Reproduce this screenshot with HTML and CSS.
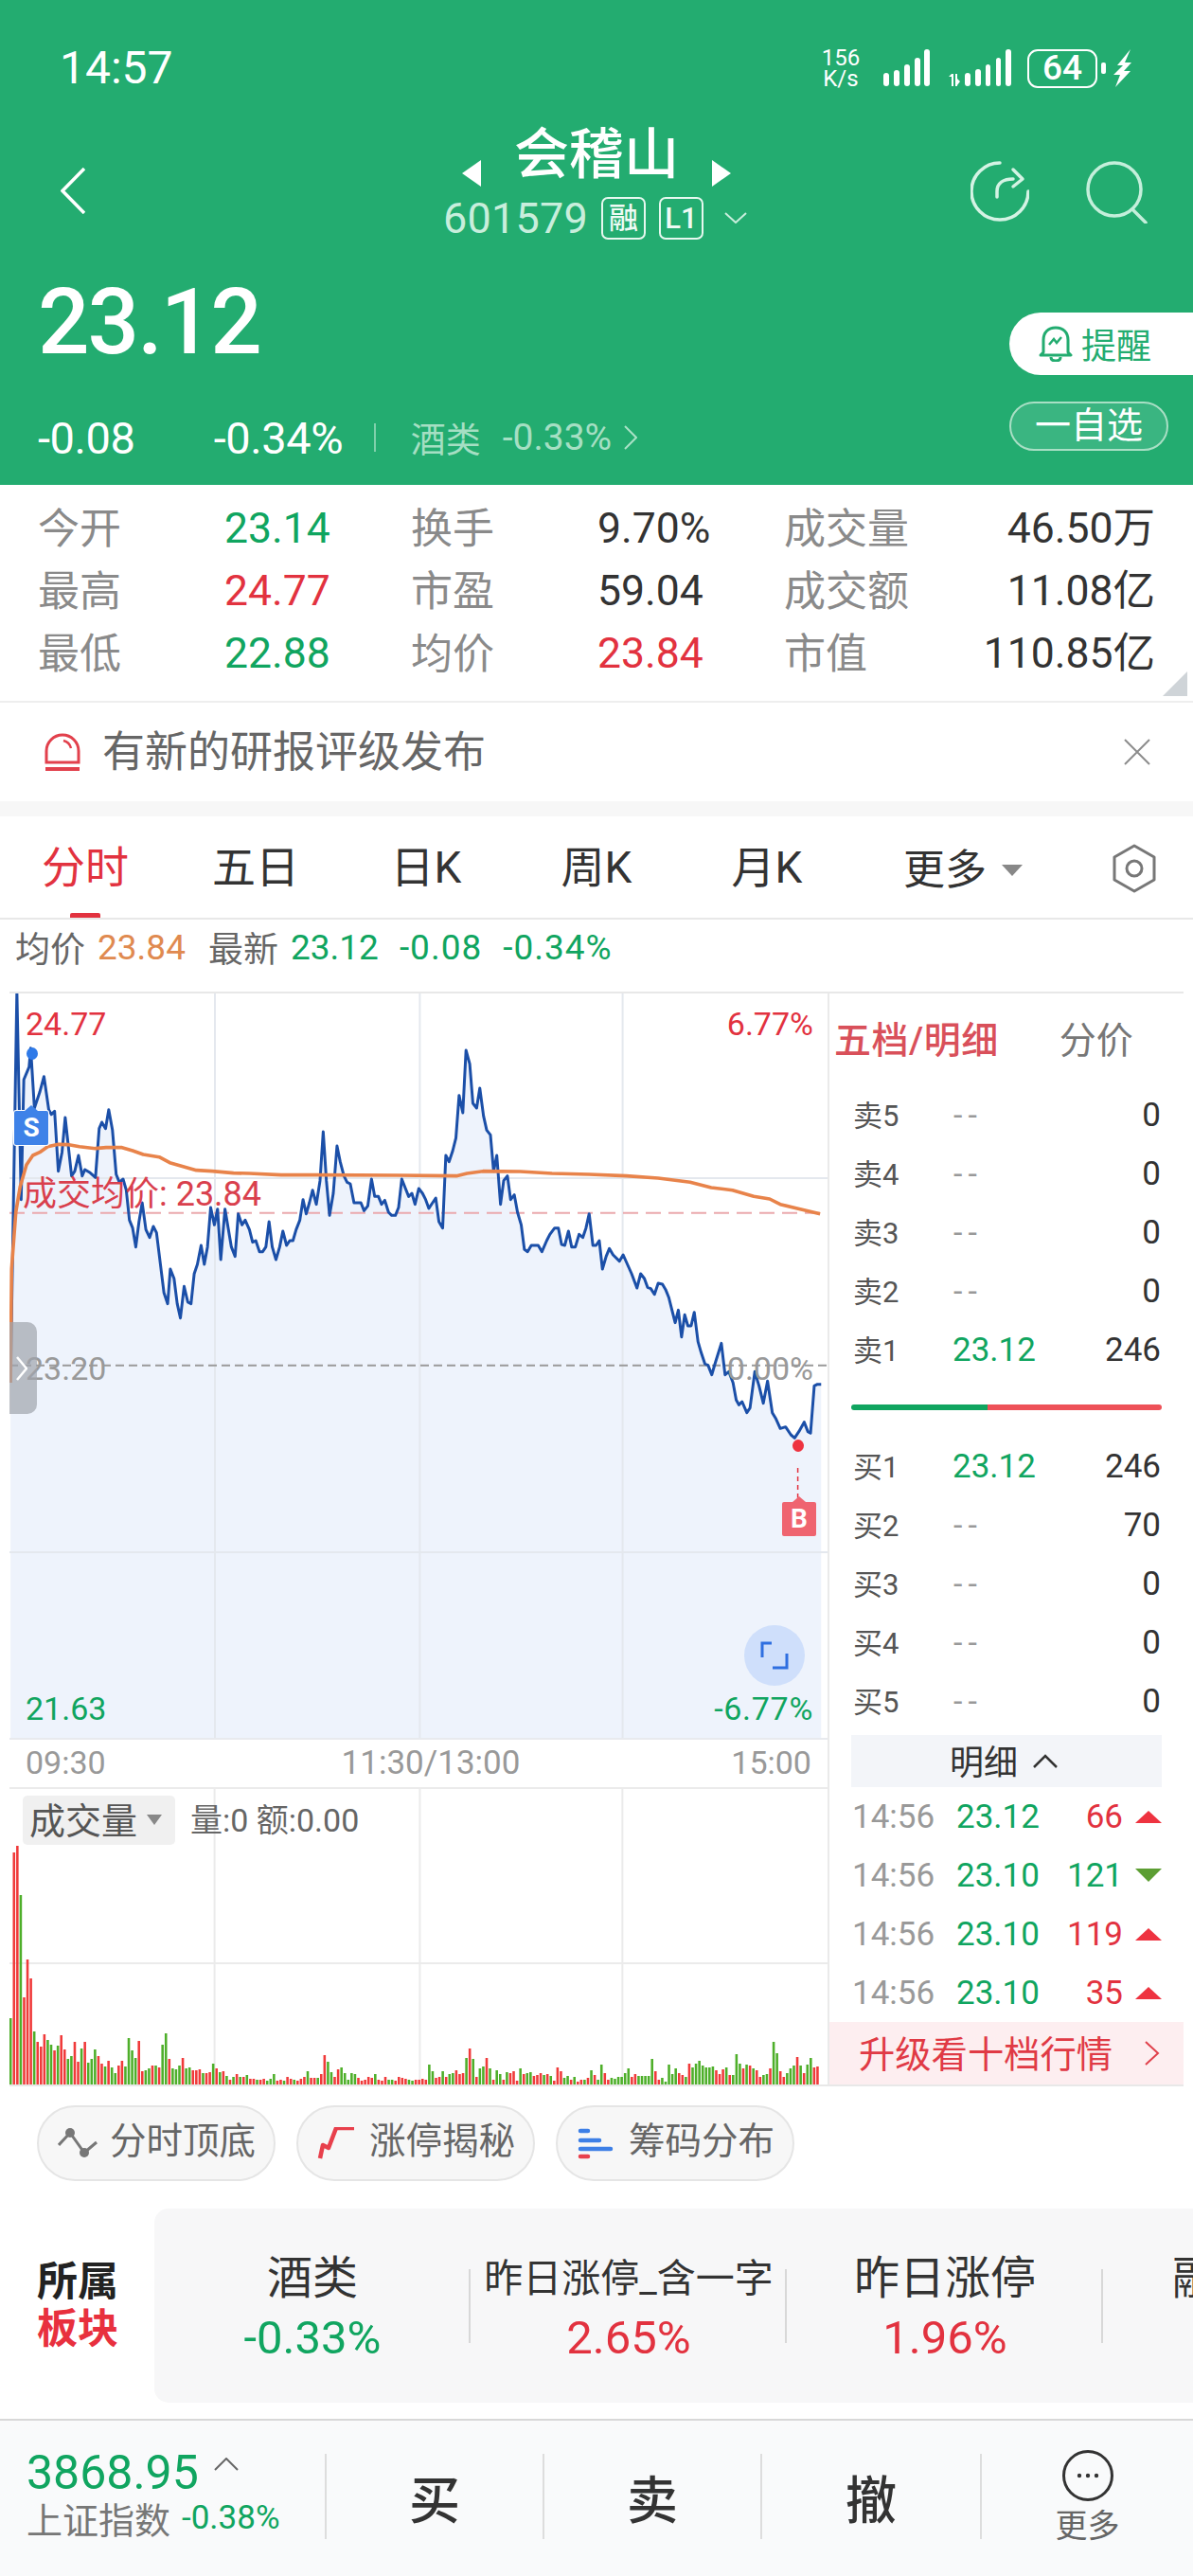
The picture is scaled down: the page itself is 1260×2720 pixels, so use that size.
FILE: index.html
```html
<!DOCTYPE html>
<html lang="zh-CN">
<head>
<meta charset="utf-8">
<title>会稽山</title>
<link rel="stylesheet" href="styles.css">
</head>
<body>
<div class="page">
  <header class="hero">
    <div class="status">
      <span class="clock">14:57</span>
      <div class="status-right">
        <div class="speed"><span>156</span><span>K/s</span></div>
        <svg class="sig1" width="50" height="40" viewBox="0 0 50 40"><g fill="#fff"><rect x="0" y="25" width="6" height="14" rx="3"/><rect x="11" y="22" width="6" height="17" rx="3"/><rect x="22" y="16" width="6" height="23" rx="3"/><rect x="33" y="9" width="6" height="30" rx="3"/><rect x="43" y="0" width="6" height="39" rx="3"/></g></svg>
        <svg class="sig2" width="70" height="40" viewBox="0 0 70 40"><g fill="#fff"><path d="M4 29l3-3h2v13H7V29zM11 26h2v13h-2zM13 31l3 3-3 4z"/><rect x="21" y="25" width="6" height="14" rx="3"/><rect x="32" y="21" width="6" height="18" rx="3"/><rect x="43" y="16" width="5" height="23" rx="2.5"/><rect x="54" y="9" width="5" height="30" rx="2.5"/><rect x="64" y="0" width="6" height="39" rx="3"/></g></svg>
        <div class="battery">64</div>
        <span class="battery-tip"></span>
        <svg class="bolt" width="20" height="40" viewBox="0 0 20 40"><path fill="#fff" d="M18 0L4 17h6L0 27h7L2 40l16-17h-7l8-9h-7z"/></svg>
      </div>
    </div>
    <div class="nav">
      <svg class="back" width="26" height="49" viewBox="0 0 26 49"><path d="M25 1L2 24.5 25 48" fill="none" stroke="#fff" stroke-width="3.5"/></svg>
      <div class="nav-center">
        <div class="title-row">
          <span class="tri-left"></span>
          <h1 class="title">会稽山</h1>
          <span class="tri-right"></span>
        </div>
        <div class="code-row">
          <span class="code">601579</span>
          <span class="badge badge-first">融</span>
          <span class="badge">L1</span>
          <svg class="code-caret" width="24" height="12" viewBox="0 0 24 12"><path d="M1 1l11 10L23 1" fill="none" stroke="#c8eedc" stroke-width="2"/></svg>
        </div>
      </div>
      <div class="nav-tools">
        <svg width="62" height="64" viewBox="0 0 62 64"><g fill="none" stroke="#d4f3e4" stroke-width="3.5" stroke-linecap="round" stroke-linejoin="round"><path d="M31 2A30 30 0 1 0 61 32"/><path d="M28 38v-6c0-9 7-13 17-13"/><path d="M45 9l10 10-10 8"/></g></svg>
        <svg width="66" height="66" viewBox="0 0 66 66"><g fill="none" stroke="#c4efdb" stroke-width="3.5" stroke-linecap="round"><circle cx="30" cy="30" r="28"/><path d="M50 52l13 13"/></g></svg>
      </div>
    </div>
    <div class="quote">
      <div class="quote-left">
        <div class="price">23.12</div>
        <div class="change-row">
          <span class="chg">-0.08</span>
          <span class="chg chg-pct">-0.34%</span>
          <span class="sep"></span>
          <span class="industry">酒类</span>
          <span class="industry-pct">-0.33%</span>
          <svg class="industry-arrow" width="14" height="26" viewBox="0 0 14 26"><path d="M1 1l12 12L1 25" fill="none" stroke="#a9e2c6" stroke-width="2"/></svg>
        </div>
      </div>
      <div class="quote-right">
        <div class="remind">
          <svg width="36" height="38" viewBox="0 0 36 38"><g fill="none" stroke="#23ac70" stroke-width="3"><path d="M5 28V15C5 7 10 2 18 2s13 5 13 13v13l3 3H2z" stroke-linejoin="round"/><path d="M13 33c0 3 2 4 5 4s5-1 5-4"/><path d="M11 20l5-6 3 4 5-6" stroke-width="2.5"/></g></svg>
          <span>提醒</span>
        </div>
        <div class="watch">一自选</div>
      </div>
    </div>
  </header>

  <section class="stats">
    <span class="s-label">今开</span><span class="s-val green">23.14</span>
    <span class="s-label">换手</span><span class="s-val">9.70%</span>
    <span class="s-label">成交量</span><span class="s-val right">46.50万</span>
    <span class="s-label">最高</span><span class="s-val red">24.77</span>
    <span class="s-label">市盈</span><span class="s-val">59.04</span>
    <span class="s-label">成交额</span><span class="s-val right">11.08亿</span>
    <span class="s-label">最低</span><span class="s-val green">22.88</span>
    <span class="s-label">均价</span><span class="s-val red">23.84</span>
    <span class="s-label">市值</span><span class="s-val right">110.85亿</span>
    <span class="corner"></span>
  </section>

  <section class="notice">
    <svg class="notice-icon" width="38" height="40" viewBox="0 0 38 40"><g fill="none" stroke="#e2404c" stroke-width="3"><path d="M2 31V19a17 17 0 0 1 34 0v12z"/><path d="M20 8c4 1 7 4 8 8" stroke-width="2.5"/><path d="M1 38h36" stroke-width="4"/></g></svg>
    <span class="notice-text">有新的研报评级发布</span>
    <svg class="notice-x" width="28" height="28" viewBox="0 0 28 28"><path d="M1 1l26 26M27 1L1 27" stroke="#8c8c8c" stroke-width="2"/></svg>
  </section>
  <div class="band"></div>

  <nav class="tabs">
    <span class="tab active">分时</span>
    <span class="tab">五日</span>
    <span class="tab">日K</span>
    <span class="tab">周K</span>
    <span class="tab">月K</span>
    <span class="tab-more">更多<i class="caret"></i></span>
    <svg class="gear" width="48" height="52" viewBox="0 0 48 52"><g fill="none" stroke="#777" stroke-width="3"><path d="M24 2l21 12v24L24 50 3 38V14z" stroke-linejoin="round"/><circle cx="24" cy="26" r="8"/></g></svg>
  </nav>

  <div class="info">
    <span class="i-label">均价</span><span class="i-val orange">23.84</span>
    <span class="i-label i-gap">最新</span><span class="i-val green">23.12</span>
    <span class="i-pair green">-0.08</span><span class="i-pair green">-0.34%</span>
  </div>

  <section class="market">
    <div class="charts">
      <div class="main-chart">
        <svg class="fill-svg" viewBox="18 27 1541 2358" preserveAspectRatio="none">
          <path class="area" d="M20 1260L32 20L40 680L45 300L55 260L58 200L65 390L75 340L83 290L92 395L97 410L103 400L110 590L117 530L123 420L135 605L141 590L148 540L155 605L160 585L170 595L180 610L187 455L192 435L199 455L205 395L212 460L219 600L225 625L232 615L238 650L244 745L250 770L256 830L262 750L268 690L275 775L282 800L289 765L295 785L302 880L309 975L316 1010L321 900L328 930L334 1010L340 1055L347 955L354 1005L360 1010L366 915L372 885L379 825L385 885L391 830L397 705L404 760L410 710L416 870L424 710L430 770L436 830L443 860L449 725L456 760L462 745L470 775L476 815L482 810L489 845L495 845L501 830L507 750L513 830L520 870L527 830L533 780L540 825L546 810L552 810L558 775L565 745L571 680L577 725L583 690L589 650L596 695L603 620L609 465L615 620L621 730L628 660L635 510L641 560L648 605L654 625L660 630L667 690L674 690L680 690L686 715L693 700L700 615L706 670L713 670L719 695L725 682L732 720L738 730L745 730L751 705L757 615L764 645L770 670L776 660L782 695L789 645L796 660L802 680L808 708L815 690L821 675L827 750L834 770L840 540L846 560L853 525L859 485L865 350L872 405L878 207L885 250L891 375L898 390L904 327L911 415L917 460L924 475L930 590L936 540L943 695L949 620L956 605L962 680L969 665L975 720L982 760L988 838L994 845L1001 825L1014 825L1021 845L1030 810L1036 790L1045 770L1052 770L1058 822L1064 825L1071 780L1077 830L1084 830L1091 790L1098 800L1104 770L1110 725L1117 825L1123 825L1129 810L1135 900L1142 860L1148 835L1155 855L1167 875L1174 855L1182 885L1190 915L1200 960L1207 915L1214 930L1220 958L1226 962L1233 980L1240 945L1248 948L1254 965L1260 990L1266 1030L1272 1070L1278 1030L1284 1115L1290 1045L1296 1080L1302 1080L1308 1037L1315 1130L1321 1165L1328 1200L1334 1205L1341 1235L1347 1200L1359 1135L1366 1235L1373 1225L1381 1260L1387 1315L1392 1330L1398 1320L1407 1355L1413 1340L1422 1225L1430 1270L1438 1325L1446 1255L1455 1355L1462 1375L1470 1405L1480 1400L1490 1425L1497 1435L1505 1415L1515 1385L1522 1415L1527 1420L1534 1270L1540 1265L1547 1265V2385H20Z"/>
          <g class="grid"><path d="M405 27V2385M791 27V2385M1173 27V2385M18 612H1559M18 1797H1559"/></g>
          <path class="dash-red" d="M18 722H1559"/>
          <path class="dash-grey" d="M18 1205H1559"/>
          <path class="price-line" d="M20 1260L32 20L40 680L45 300L55 260L58 200L65 390L75 340L83 290L92 395L97 410L103 400L110 590L117 530L123 420L135 605L141 590L148 540L155 605L160 585L170 595L180 610L187 455L192 435L199 455L205 395L212 460L219 600L225 625L232 615L238 650L244 745L250 770L256 830L262 750L268 690L275 775L282 800L289 765L295 785L302 880L309 975L316 1010L321 900L328 930L334 1010L340 1055L347 955L354 1005L360 1010L366 915L372 885L379 825L385 885L391 830L397 705L404 760L410 710L416 870L424 710L430 770L436 830L443 860L449 725L456 760L462 745L470 775L476 815L482 810L489 845L495 845L501 830L507 750L513 830L520 870L527 830L533 780L540 825L546 810L552 810L558 775L565 745L571 680L577 725L583 690L589 650L596 695L603 620L609 465L615 620L621 730L628 660L635 510L641 560L648 605L654 625L660 630L667 690L674 690L680 690L686 715L693 700L700 615L706 670L713 670L719 695L725 682L732 720L738 730L745 730L751 705L757 615L764 645L770 670L776 660L782 695L789 645L796 660L802 680L808 708L815 690L821 675L827 750L834 770L840 540L846 560L853 525L859 485L865 350L872 405L878 207L885 250L891 375L898 390L904 327L911 415L917 460L924 475L930 590L936 540L943 695L949 620L956 605L962 680L969 665L975 720L982 760L988 838L994 845L1001 825L1014 825L1021 845L1030 810L1036 790L1045 770L1052 770L1058 822L1064 825L1071 780L1077 830L1084 830L1091 790L1098 800L1104 770L1110 725L1117 825L1123 825L1129 810L1135 900L1142 860L1148 835L1155 855L1167 875L1174 855L1182 885L1190 915L1200 960L1207 915L1214 930L1220 958L1226 962L1233 980L1240 945L1248 948L1254 965L1260 990L1266 1030L1272 1070L1278 1030L1284 1115L1290 1045L1296 1080L1302 1080L1308 1037L1315 1130L1321 1165L1328 1200L1334 1205L1341 1235L1347 1200L1359 1135L1366 1235L1373 1225L1381 1260L1387 1315L1392 1330L1398 1320L1407 1355L1413 1340L1422 1225L1430 1270L1438 1325L1446 1255L1455 1355L1462 1375L1470 1405L1480 1400L1490 1425L1497 1435L1505 1415L1515 1385L1522 1415L1527 1420L1534 1270L1540 1265L1547 1265"/>
          <path class="avg-line" d="M20 1260L22 900L30 720L38 640L50 570L62 540L75 530L90 512L110 505L130 506L150 512L180 518L200 515L230 515L250 525L270 537L300 545L320 563L345 575L370 587L400 590L440 596L470 597L530 602L600 602L750 603L860 605L880 597L910 590L980 591L1040 597L1110 600L1180 605L1240 612L1300 625L1340 642L1380 650L1420 670L1450 678L1470 695L1500 707L1545 725"/>
          <path class="b-link" d="M1503 1530V1625"/>
        </svg>
        <span class="lbl lbl-tl red">24.77</span>
        <span class="lbl lbl-tr red">6.77%</span>
        <span class="lbl lbl-avg">成交均价: 23.84</span>
        <span class="lbl lbl-ml grey">23.20</span>
        <span class="lbl lbl-mr grey">0.00%</span>
        <span class="lbl lbl-bl green">21.63</span>
        <span class="lbl lbl-br green">-6.77%</span>
        <span class="dot-s"></span>
        <span class="tag tag-s">S</span>
        <span class="dot-b"></span>
        <span class="tag tag-b">B</span>
        <span class="handle"><svg width="12" height="26" viewBox="0 0 12 26"><path d="M1 1l10 12L1 25" fill="none" stroke="#fff" stroke-width="2.5"/></svg></span>
        <span class="expand"><svg width="30" height="30" viewBox="0 0 30 30"><path d="M12 2H2v15M28 13v15H13" fill="none" stroke="#2f6fe0" stroke-width="3"/></svg></span>
      </div>
      <div class="axis"><span>09:30</span><span>11:30/13:00</span><span>15:00</span></div>
      <div class="vol-chart">
        <svg class="fill-svg" viewBox="-0.34 -312 242.3 312" preserveAspectRatio="none">
          <g class="grid vol-grid"><path d="M60.4 -312V0M121.2 -312V0M181.2 -312V0M-1 -128H243"/></g>
          <path class="bars bars-red" d="M1 0v-245M2 0v-252M4 0v-92M5 0v-132M6 0v-112M8 0v-45M9 0v-40M10 0v-53M13 0v-36M15 0v-52M16 0v-37M19 0v-45M20 0v-24M22 0v-45M26 0v-30M27 0v-22M29 0v-25M32 0v-20M33 0v-25M38 0v-46M39 0v-14M42 0v-20M44 0v-18M47 0v-27M51 0v-28M54 0v-15M55 0v-15M56 0v-16M58 0v-12M59 0v-13M61 0v-17M63 0v-14M65 0v-5M67 0v-11M69 0v-8M71 0v-6M72 0v-6M74 0v-5M75 0v-6M79 0v-4M80 0v-5M82 0v-8M83 0v-6M85 0v-4M86 0v-6M87 0v-8M89 0v-7M90 0v-7M92 0v-11M93 0v-31M96 0v-8M97 0v-16M103 0v-7M104 0v-4M105 0v-5M106 0v-8M107 0v-7M109 0v-5M110 0v-4M111 0v-8M114 0v-4M115 0v-8M116 0v-7M117 0v-6M120 0v-5M121 0v-5M122 0v-6M123 0v-5M126 0v-7M127 0v-8M129 0v-8M132 0v-15M133 0v-11M134 0v-12M136 0v-38M138 0v-8M141 0v-28M143 0v-5M146 0v-5M148 0v-12M149 0v-14M150 0v-4M152 0v-11M155 0v-9M156 0v-10M157 0v-12M159 0v-11M161 0v-4M162 0v-18M163 0v-14M166 0v-5M168 0v-3M169 0v-5M171 0v-7M173 0v-10M176 0v-12M177 0v-5M184 0v-8M185 0v-11M191 0v-14M192 0v-5M198 0v-12M199 0v-10M201 0v-22M209 0v-15M210 0v-11M211 0v-16M213 0v-10M217 0v-17M219 0v-20M221 0v-15M222 0v-8M225 0v-17M228 0v-14M229 0v-8M233 0v-29M235 0v-12M238 0v-18M239 0v-19"/>
          <path class="bars bars-green" d="M0 0v-70M3 0v-200M7 0v-56M11 0v-47M12 0v-42M14 0v-41M17 0v-27M18 0v-30M21 0v-38M23 0v-23M24 0v-27M25 0v-37M28 0v-19M30 0v-18M31 0v-12M34 0v-19M35 0v-49M36 0v-36M37 0v-28M40 0v-15M41 0v-17M43 0v-20M45 0v-42M46 0v-54M48 0v-17M49 0v-16M50 0v-20M52 0v-17M53 0v-18M57 0v-12M60 0v-22M62 0v-13M64 0v-9M66 0v-8M68 0v-8M70 0v-10M73 0v-5M76 0v-4M77 0v-6M78 0v-11M81 0v-4M84 0v-5M88 0v-14M91 0v-7M94 0v-24M95 0v-13M98 0v-18M99 0v-12M100 0v-5M101 0v-12M102 0v-11M108 0v-11M112 0v-5M113 0v-5M118 0v-5M119 0v-4M124 0v-21M125 0v-14M128 0v-14M130 0v-11M131 0v-12M135 0v-28M137 0v-27M139 0v-17M140 0v-19M142 0v-17M144 0v-15M145 0v-11M147 0v-13M151 0v-17M153 0v-12M154 0v-13M158 0v-10M160 0v-9M164 0v-7M165 0v-9M167 0v-8M170 0v-5M172 0v-15M174 0v-5M175 0v-21M178 0v-7M179 0v-6M180 0v-8M181 0v-8M182 0v-12M183 0v-17M186 0v-9M187 0v-9M188 0v-9M189 0v-9M190 0v-27M193 0v-7M194 0v-3M195 0v-21M196 0v-11M197 0v-17M200 0v-8M202 0v-18M203 0v-22M204 0v-25M205 0v-20M206 0v-18M207 0v-18M208 0v-19M212 0v-18M214 0v-10M215 0v-32M216 0v-22M218 0v-21M220 0v-17M223 0v-10M224 0v-11M226 0v-45M227 0v-33M230 0v-12M231 0v-17M232 0v-20M234 0v-20M236 0v-21M237 0v-28"/>
        </svg>
        <div class="vol-head">
          <span class="vol-tag"><span class="vol-tag-text">成交量</span><i class="caret small"></i></span>
          <span class="vol-text">量:0 额:0.00</span>
        </div>
      </div>
    </div>
    <aside class="book">
      <div class="book-tabs"><span class="book-tab-on">五档/明细</span><span class="book-tab-off">分价</span></div>
      <div class="book-rows">
        <div class="row"><span class="r-name">卖5</span><span class="r-none">--</span><span class="r-vol">0</span></div>
        <div class="row"><span class="r-name">卖4</span><span class="r-none">--</span><span class="r-vol">0</span></div>
        <div class="row"><span class="r-name">卖3</span><span class="r-none">--</span><span class="r-vol">0</span></div>
        <div class="row"><span class="r-name">卖2</span><span class="r-none">--</span><span class="r-vol">0</span></div>
        <div class="row"><span class="r-name">卖1</span><span class="r-price green">23.12</span><span class="r-vol">246</span></div>
      </div>
      <div class="ratio"><span class="ratio-g"></span><span class="ratio-r"></span></div>
      <div class="book-rows">
        <div class="row"><span class="r-name">买1</span><span class="r-price green">23.12</span><span class="r-vol">246</span></div>
        <div class="row"><span class="r-name">买2</span><span class="r-none">--</span><span class="r-vol">70</span></div>
        <div class="row"><span class="r-name">买3</span><span class="r-none">--</span><span class="r-vol">0</span></div>
        <div class="row"><span class="r-name">买4</span><span class="r-none">--</span><span class="r-vol">0</span></div>
        <div class="row"><span class="r-name">买5</span><span class="r-none">--</span><span class="r-vol">0</span></div>
      </div>
      <div class="detail-head"><span>明细</span><svg width="26" height="15" viewBox="0 0 26 15"><path d="M1 14L13 2l12 12" fill="none" stroke="#333" stroke-width="2.5"/></svg></div>
      <div class="tick"><span class="t-time">14:56</span><span class="t-price green">23.12</span><span class="t-vol red">66</span><i class="up"></i></div>
      <div class="tick"><span class="t-time">14:56</span><span class="t-price green">23.10</span><span class="t-vol green">121</span><i class="down"></i></div>
      <div class="tick"><span class="t-time">14:56</span><span class="t-price green">23.10</span><span class="t-vol red">119</span><i class="up"></i></div>
      <div class="tick"><span class="t-time">14:56</span><span class="t-price green">23.10</span><span class="t-vol red">35</span><i class="up"></i></div>
      <div class="upgrade"><span>升级看十档行情</span><svg width="16" height="26" viewBox="0 0 16 26"><path d="M1 1l13 12L1 25" fill="none" stroke="#e0404b" stroke-width="2"/></svg></div>
    </aside>
  </section>

  <div class="chips">
    <div class="chip">
      <span class="chip-icon"><svg width="42" height="32" viewBox="0 0 42 32"><g fill="none" stroke="#777" stroke-width="3"><path d="M1 18L13 5l15 21 13-11"/></g><circle cx="13" cy="5" r="5" fill="#777"/><circle cx="28" cy="26" r="5" fill="#777"/></svg></span>
      <span class="chip-text">分时顶底</span>
    </div>
    <div class="chip">
      <span class="chip-icon"><svg width="40" height="34" viewBox="0 0 40 34"><path d="M3 33l3-14 6 3 8-21h19" fill="none" stroke="#e8404c" stroke-width="4.5" stroke-linejoin="round"/></svg></span>
      <span class="chip-text">涨停揭秘</span>
    </div>
    <div class="chip">
      <span class="chip-icon"><svg width="40" height="34" viewBox="0 0 40 34"><g fill="none" stroke-width="4.5" stroke-linecap="round"><path d="M4 4h8M4 14h20M4 23h32" stroke="#3d7fe6"/><path d="M4 31h8" stroke="#e8404c"/></g></svg></span>
      <span class="chip-text">筹码分布</span>
    </div>
  </div>

  <section class="sectors">
    <div class="sec-title"><span>所属</span><span class="red-strong">板块</span></div>
    <div class="sec-card">
      <div class="sec-item"><span class="sec-name">酒类</span><span class="sec-val green">-0.33%</span></div>
      <div class="sec-item"><span class="sec-name narrow">昨日涨停_含一字</span><span class="sec-val red">2.65%</span></div>
      <div class="sec-item"><span class="sec-name">昨日涨停</span><span class="sec-val red">1.96%</span></div>
      <div class="sec-item sec-last"><span class="sec-name">融</span></div>
    </div>
  </section>

  <footer class="footer">
    <div class="f-index">
      <div class="f-top"><span class="f-num">3868.95</span><svg width="26" height="14" viewBox="0 0 26 14"><path d="M1 13L13 1l12 12" fill="none" stroke="#666" stroke-width="2"/></svg></div>
      <div class="f-bottom"><span class="f-name">上证指数</span><span class="f-pct">-0.38%</span></div>
    </div>
    <div class="f-btn">买</div>
    <div class="f-btn">卖</div>
    <div class="f-btn f-wide">撤</div>
    <div class="f-more">
      <svg width="54" height="54" viewBox="0 0 54 54"><circle cx="27" cy="27" r="25.5" fill="none" stroke="#333" stroke-width="3"/><g fill="#333"><circle cx="18" cy="27" r="2.2"/><circle cx="27" cy="27" r="2.2"/><circle cx="36" cy="27" r="2.2"/></g></svg>
      <span>更多</span>
    </div>
  </footer>
</div>
</body>
</html>
```
FILE: styles.css
```css
* { box-sizing: border-box; margin: 0; padding: 0; }
html, body { background: #fff; }
body { font-family: Roboto, "Noto Sans CJK SC", sans-serif; color: #333; }
i { font-style: normal; }
svg { display: block; flex: none; }
.page { width: 1260px; height: 2720px; overflow: hidden; display: flex; flex-direction: column; }

.green { color: #10a560; }
.red { color: #e2323f; }
.grey { color: #999; }
.orange { color: #e08a50; }

/* header */
.hero { background: #23ac70; height: 512px; color: #fff; flex: none; }
.status { height: 126px; padding: 18px 64px 0 64px; display: flex; justify-content: space-between; align-items: center; }
.clock { font-size: 48px; line-height: 1; margin-left: -1px; }
.status-right { display: flex; align-items: center; }
.speed { display: flex; flex-direction: column; align-items: center; width: 44px; font-size: 24px; line-height: 22px; margin-left: -30px; }
.sig1 { margin-left: 23px; }
.sig2 { margin-left: 15px; }
.battery { margin-left: 17px; width: 74px; height: 41px; border: 2.5px solid #fff; border-radius: 11px; font-size: 37px; font-weight: 500; line-height: 36px; text-align: center; }
.battery-tip { width: 5px; height: 12px; margin-left: 4px; background: #fff; border-radius: 2px; }
.bolt { margin-left: 8px; }

.nav { height: 134px; display: flex; position: relative; padding-left: 64px; }
.back { margin-top: 51px; }
.nav-center { position: absolute; left: 0; right: 0; top: 0; display: flex; flex-direction: column; align-items: center; }
.title-row { display: flex; align-items: center; height: 74px; gap: 35px; }
.title { font-size: 58px; font-weight: 500; line-height: 74px; }
.tri-left, .tri-right { width: 0; height: 0; margin-top: 40px; border-top: 14px solid transparent; border-bottom: 14px solid transparent; }
.tri-left { border-right: 20px solid #fff; }
.tri-right { border-left: 20px solid #fff; }
.code-row { display: flex; align-items: center; height: 60px; margin-left: -3px; }
.code { font-size: 45px; color: #c8eedc; letter-spacing: 0.2px; }
.badge { width: 47px; height: 45px; margin-left: 14px; border: 2px solid #e6f8ef; border-radius: 7px; font-size: 31px; font-weight: 500; line-height: 41px; text-align: center; color: #eefaf4; }
.code-caret { margin-left: 22px; }
.nav-tools { margin-left: auto; margin-right: 47px; margin-top: 44px; display: flex; gap: 60px; position: relative; align-self: flex-start; }

.quote { display: flex; justify-content: space-between; }
.quote-left { padding-left: 40px; }
.price { font-size: 96px; font-weight: 500; line-height: 160px; letter-spacing: -2px; height: 156px; }
.change-row { height: 92px; display: flex; align-items: center; }
.chg { font-size: 47px; letter-spacing: -0.4px; }
.chg-pct { margin-left: 83px; }
.sep { width: 1.5px; height: 30px; margin-left: 33px; background: #7fd0ab; }
.industry { margin-left: 37px; font-size: 37px; color: #a5dfc3; }
.industry-pct { margin-left: 23px; font-size: 39px; color: #a5dfc3; }
.industry-arrow { margin-left: 13px; }
.quote-right { display: flex; flex-direction: column; align-items: flex-end; padding-top: 70px; }
.remind { width: 194px; height: 66px; background: #fff; border-radius: 33px 0 0 33px; display: flex; align-items: center; padding-left: 31px; gap: 9px; color: #23ac70; font-size: 37px; }
.watch { width: 168px; height: 52px; margin: 28px 26px 0 0; border: 2px solid #a9dfc5; border-radius: 26px; background: #3ab581; font-size: 38px; line-height: 46px; text-align: center; color: #fff; }

/* stats */
.stats { height: 230px; padding-top: 14px; padding-left: 40px; border-bottom: 2px solid #eee; flex: none; display: grid; grid-template-columns: 197px 197px 197px 197px 196px 196px; grid-auto-rows: 66px; position: relative; font-size: 44.5px; }
.s-label { color: #8a8a8a; font-size: 44px; line-height: 66px; }
.s-val { color: #333; line-height: 64px; white-space: nowrap; }
.s-val.green { color: #10a560; }
.s-val.red { color: #e2323f; }
.s-val.right { text-align: right; }
.corner { position: absolute; right: 6px; top: 197px; width: 0; height: 0; border-left: 26px solid transparent; border-bottom: 26px solid #cfd4d8; }

/* notice */
.notice { height: 104px; display: flex; align-items: center; padding: 0 45px 0 47px; flex: none; }
.notice-text { margin-left: 23px; margin-bottom: 7px; font-size: 45px; color: #666; }
.notice-x { margin-left: auto; }
.band { height: 16px; background: #f7f7f7; flex: none; }

/* tabs */
.tabs { height: 109px; border-bottom: 2px solid #e8e8e8; padding: 0 38px 0 0; display: flex; align-items: center; flex: none; }
.tab { width: 180px; height: 100%; text-align: center; font-size: 46px; line-height: 108px; color: #333; position: relative; }
.tab.active { color: #e2323f; }
.tab.active::after { content: ""; position: absolute; left: 74px; bottom: 0; width: 32px; height: 5px; background: #e2323f; border-radius: 2px 2px 0 0; }
.tab-more { margin-left: 54px; font-size: 44px; color: #333; display: flex; align-items: center; margin-bottom: 2px; }
.caret { display: block; width: 0; height: 0; margin-left: 16px; margin-top: 8px; border-left: 11px solid transparent; border-right: 11px solid transparent; border-top: 12px solid #888; }
.caret.small { border-left-width: 8px; border-right-width: 8px; border-top-width: 11px; margin-left: 10px; margin-top: 0; }
.gear { margin-left: auto; margin-top: 2px; }

/* info line */
.info { height: 76px; padding: 0 0 18px 16px; display: flex; align-items: center; font-size: 37px; flex: none; }
.i-label { color: #666; font-size: 37px; }
.i-val { margin-left: 13px; }
.i-gap { margin-left: 24px; }
.i-pair { margin-left: 22px; letter-spacing: 1px; }

/* market */
.market { height: 1156px; margin: 0 10px; flex: none; display: flex; border-top: 2px solid #e8e8e8; border-bottom: 2px solid #e8e8e8; }
.charts { width: 866px; flex: none; border-right: 2px solid #eaeaea; display: flex; flex-direction: column; }
.main-chart { height: 786px; position: relative; flex: none; }
.fill-svg { width: 100%; height: 100%; position: absolute; inset: 0; }
.area { fill: #eef3fc; }
.grid path { fill: none; stroke: #e4e8ee; stroke-width: 2; vector-effect: non-scaling-stroke; }
.vol-grid path { stroke: #ebebeb; }
.dash-red { fill: none; stroke: #eaa9ad; stroke-width: 2; stroke-dasharray: 16 8; vector-effect: non-scaling-stroke; }
.dash-grey { fill: none; stroke: #9a9a9a; stroke-width: 2; stroke-dasharray: 9 5; vector-effect: non-scaling-stroke; }
.price-line { fill: none; stroke: #1b4fa8; stroke-width: 3; stroke-linejoin: round; vector-effect: non-scaling-stroke; }
.avg-line { fill: none; stroke: #e8834a; stroke-width: 3.6; stroke-linejoin: round; vector-effect: non-scaling-stroke; }
.b-link { fill: none; stroke: #e2323f; stroke-width: 1.5; stroke-dasharray: 5 4; vector-effect: non-scaling-stroke; }

.lbl { position: absolute; line-height: 40px; font-size: 34px; }
.lbl-tl { left: 17px; top: 12px; }
.lbl-tr { right: 15px; top: 12px; }
.lbl-avg { left: 14px; top: 190px; font-size: 36px; line-height: 44px; color: #d9404d; }
.lbl-ml { left: 17px; top: 376px; }
.lbl-mr { right: 15px; top: 376px; }
.lbl-bl { left: 17px; top: 735px; }
.lbl-br { right: 15px; top: 735px; letter-spacing: 0.7px; }
.dot-s { position: absolute; left: 18px; top: 57px; width: 12px; height: 13px; border-radius: 50%; background: #2f7ae8; }
.dot-b { position: absolute; left: 827px; top: 471px; width: 12px; height: 13px; border-radius: 50%; background: #ee3340; }
.tag { position: absolute; width: 36px; height: 36px; color: #fff; font-size: 28px; font-weight: 700; text-align: center; line-height: 36px; border-radius: 2px; }
.tag::before { content: ""; position: absolute; left: 50%; top: -6px; margin-left: -7px; border-left: 7px solid transparent; border-right: 7px solid transparent; border-bottom: 6px solid currentColor; }
.tag-s { left: 5px; top: 124px; background: #3e82e8; box-shadow: 0 0 0 1px #fff; }
.tag-s::before { border-bottom-color: #3e82e8; }
.tag-b { left: 816px; top: 537px; background: #ef6470; }
.tag-b::before { border-bottom-color: #ef6470; }
.handle { position: absolute; left: 0; top: 347px; width: 29px; height: 97px; background: rgba(160, 164, 172, 0.7); border-radius: 0 10px 10px 0; display: flex; align-items: center; padding-left: 7px; }
.expand { position: absolute; left: 776px; top: 667px; width: 64px; height: 64px; border-radius: 50%; background: #cfdffb; display: flex; align-items: center; justify-content: center; }

.axis { height: 52px; border-top: 2px solid #e8eaee; display: flex; justify-content: space-between; align-items: center; padding: 0 17px 2px 17px; font-size: 34px; color: #999; flex: none; }
.axis span:nth-child(2) { margin-left: 26px; font-size: 35px; }
.vol-chart { flex: 1; position: relative; border-top: 2px solid #ebebeb; }
.bars { fill: none; stroke-width: 0.72; }
.bars-red { stroke: #f03a3a; }
.bars-green { stroke: #4eaf2a; }
.vol-head { position: absolute; left: 14px; top: 6px; display: flex; align-items: center; }
.vol-tag { width: 161px; height: 52px; background: #f0f0f0; border-radius: 5px; padding-left: 7px; display: flex; align-items: center; font-size: 38px; color: #555; white-space: nowrap; }
.vol-tag-text { margin-bottom: 4px; }
.vol-text { margin-left: 16px; margin-bottom: 4px; font-size: 34px; color: #666; white-space: nowrap; }

/* order book */
.book { flex: 1; display: flex; flex-direction: column; }
.book-tabs { height: 92px; padding-left: 5px; margin-bottom: 5px; display: flex; align-items: center; flex: none; }
.book-tab-on { font-size: 39px; color: #d9505a; font-weight: 500; letter-spacing: 0.5px; }
.book-tab-off { margin-left: 64px; font-size: 39px; color: #777; }
.row { height: 62px; padding: 0 24px 0 25px; display: grid; grid-template-columns: 106px 1fr auto; align-items: center; }
.r-name { font-size: 31px; color: #555; margin-bottom: 4px; }
.r-none { color: #999; font-size: 34px; letter-spacing: 6px; }
.r-price { font-size: 35px; margin-left: -1px; }
.r-vol { font-size: 35px; color: #333; text-align: right; }
.ratio { height: 6px; margin: 27px 23px 28px 23px; display: flex; flex: none; }
.ratio-g { width: 144px; background: #10a560; border-radius: 3px 0 0 3px; }
.ratio-r { flex: 1; background: #ee5158; border-radius: 0 3px 3px 0; }
.detail-head { height: 55px; margin: 5px 23px 0 23px; background: #f3f5f9; display: flex; justify-content: center; align-items: center; gap: 16px; font-size: 36px; color: #333; flex: none; }
.detail-head span { margin: 0 0 4px -6px; }
.tick { height: 62px; margin: 0 23px; padding-left: 1px; display: grid; grid-template-columns: 110px 90px 1fr 41px; align-items: center; font-size: 35px; }
.t-time { color: #999; }
.t-vol { text-align: right; }
.tick .up, .tick .down { justify-self: end; width: 0; height: 0; border-left: 14px solid transparent; border-right: 14px solid transparent; }
.tick .up { border-bottom: 13px solid #ee3340; }
.tick .down { border-top: 14px solid #5c9e33; }
.upgrade { flex: 1; background: #fdeef0; padding: 0 25px 0 31px; display: flex; align-items: center; justify-content: space-between; font-size: 38.3px; color: #e03a45; }
.upgrade span { margin-bottom: 4px; }

/* chips */
.chips { height: 129px; padding: 20px 0 0 39px; display: flex; gap: 22px; flex: none; }
.chip { width: 252px; height: 80px; border: 2px solid #e5e5e5; border-radius: 40px; background: #f7f7f7; display: flex; align-items: center; padding-left: 20px; }
.chip-icon { width: 42px; }
.chip-text { margin-left: 13px; margin-bottom: 13px; font-size: 38.5px; color: #666; white-space: nowrap; }

/* sectors */
.sectors { height: 205px; display: flex; flex: none; }
.sec-title { width: 163px; padding: 52px 0 0 39px; display: flex; flex-direction: column; font-size: 43px; font-weight: 700; line-height: 50px; color: #222; }
.red-strong { color: #e8303e; }
.sec-card { flex: 1; background: #f7f7f8; border-radius: 15px 0 0 15px; display: flex; overflow: hidden; }
.sec-item { width: 334px; flex: none; padding-top: 49px; position: relative; display: flex; flex-direction: column; align-items: center; }
.sec-item::after { content: ""; position: absolute; right: 0; top: 64px; width: 2px; height: 78px; background: #d8d8d8; }
.sec-name { font-size: 48px; line-height: 50px; color: #333; white-space: nowrap; }
.sec-name.narrow { font-size: 41px; }
.sec-last { padding-left: 73px; align-items: flex-start; }
.sec-val { font-size: 49px; line-height: 76px; }

/* footer */
.footer { flex: 1; margin-top: 17px; background: #f9fafb; border-top: 2px solid #d8d8d8; padding-top: 35px; display: flex; align-items: flex-start; }
.f-index { width: 343px; height: 90px; padding-left: 28px; }
.f-top { display: flex; align-items: center; height: 38px; margin-top: 1px; }
.f-num { font-size: 50px; line-height: 38px; color: #10a560; }
.f-top svg { margin: -18px 0 0 16px; }
.f-bottom { margin-top: 9px; height: 38px; display: flex; align-items: center; }
.f-name { font-size: 38px; color: #777; }
.f-pct { font-size: 35px; margin-left: 12px; color: #10a560; }
.f-btn { width: 230px; height: 90px; border-left: 2px solid #ddd; display: flex; align-items: center; justify-content: center; font-size: 54px; font-weight: 500; color: #333; }
.f-wide { width: 232px; }
.f-more { flex: 1; height: 90px; border-left: 2px solid #ddd; display: flex; flex-direction: column; align-items: center; justify-content: center; gap: 8px; font-size: 34px; line-height: 36px; color: #666; }
```
